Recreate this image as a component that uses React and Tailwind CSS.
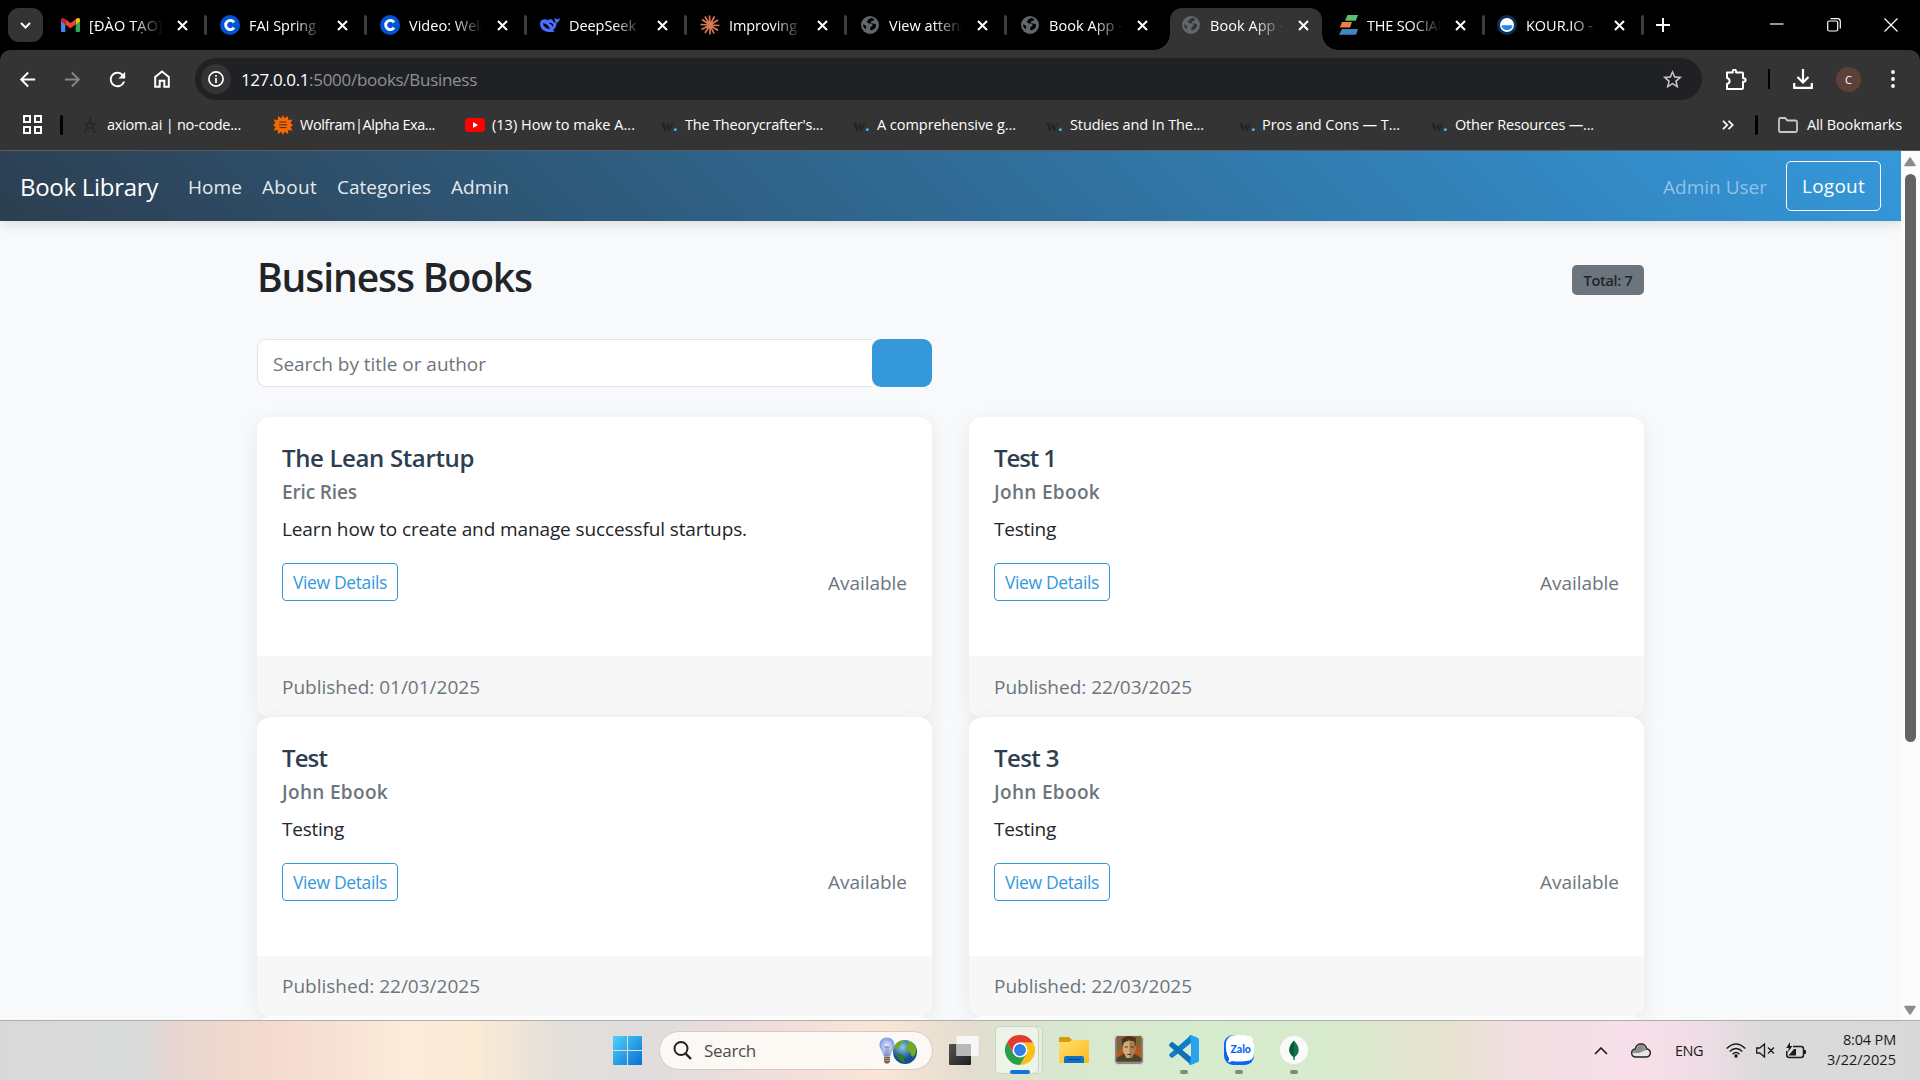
import { useLayoutEffect, useRef, useState } from "react";
import { MdArrowBack, MdArrowForward, MdRefresh, MdStarBorder } from "react-icons/md";

/* Text set to an exact width by spreading the difference over its letters. */
function Fit({ w, children, className = "" }) {
  const ref = useRef(null);
  const [gap, setGap] = useState(0);
  useLayoutEffect(() => {
    const natural = ref.current.getBoundingClientRect().width;
    setGap((w - natural) / children.length);
  }, []);
  return (
    <span ref={ref} className={"inline-block shrink-0 whitespace-pre " + className} style={{ letterSpacing: gap + "px" }}>
      {children}
    </span>
  );
}

const Cross = () => (
  <svg className="size-[11px] shrink-0" viewBox="0 0 11 11">
    <path d="M1 1l9 9M10 1l-9 9" stroke="#fff" strokeWidth="2" />
  </svg>
);

const Gmail = () => (
  <svg className="h-[14px] w-[19px]" viewBox="0 0 19 14">
    <path d="M0 2v11q0 1 1 1h3.3V5.5z" fill="#4285f4" />
    <path d="M19 2v11q0 1-1 1h-3.3V5.5z" fill="#34a853" />
    <path d="M14.7 1.2v5.2L19 3.2V1.8C19 .1 17.2-.4 16 .3z" fill="#fbbc04" />
    <path d="M4.3 6.4V1.2L9.5 5l5.2-3.8v5.2L9.5 10.3z" fill="#ea4335" />
    <path d="M0 1.8v1.4l4.3 3.2V1.2L3 .3C1.8-.4 0 .1 0 1.8z" fill="#c5221f" />
  </svg>
);
const Coursera = () => (
  <svg className="size-5" viewBox="0 0 20 20">
    <circle cx="10" cy="10" r="10" fill="#0056d2" />
    <path d="M14 7.3a4.6 4.6 0 1 0 0 5.4" fill="none" stroke="#fff" strokeWidth="2.9" />
  </svg>
);
const DeepSeek = () => (
  <svg className="h-4 w-5" viewBox="0 0 20 16">
    <path d="M12 2.5c1 2 2 3 3.800 3.300C14.500 4 14.200 2 15 .6c.4 1.200 1.200 1.700 2.200 1.600.8 0 1.700-.6 2.700-1-.1 2.300-1.400 4-3.300 4.500-.1 3.400-1.600 6-3.700 7.500l1.800 1.300c-1.500.8-3.100.7-4.500.4C4.500 15.500 0 12 0 6.800 0 4.200 1.500 2.500 4.500 2.300c1.600 0 2.800.5 4 1.500-.3-1.300.9-2 3.500-1.300z" fill="#4d6bfe" />
    <path d="M3 6.500c3-.2 5.500 1.800 7 5.500-3.700-.2-6.500-2.300-7-5.500z" fill="#000" />
    <path d="M9.500 6.500c1.800-.2 3 .9 3.300 2.600" stroke="#000" strokeWidth="1.200" fill="none" />
  </svg>
);
const Claude = () => (
  <svg className="size-5" viewBox="0 0 20 20">
    <path d="M10 10L9.500.5M10 10l4.500-8.500M10 10l8-5M10 10l9.500.5M10 10l8 5.500M10 10l4 8.500M10 10v9.500M10 10l-5 8M10 10l-8.500 4.500M10 10L.5 9.500M10 10L2 4.500M10 10L5 1.500" stroke="#d97757" strokeWidth="1.700" />
  </svg>
);
const Globe = ({ active }) => (
  <svg className={active ? "size-[18px] text-[#343434]" : "size-[18px] text-black"} viewBox="0 0 18 18">
    <circle cx="9" cy="9" r="9" fill="#62666b" />
    <path d="M10.500 2C8.500 2.500 7 3.400 6.300 5c-.5 1.500.3 2.400 1.700 2.600 1.600.2 3 .1 3.500 1.200.4 1-.5 1.500-1.500 2-.8.5-.5 1.700-1.300 2.700l1.800.8c2.300-.8 4-2.200 4.500-4.300.3-1.400-.5-2-1.800-2.200-1.700-.3-3.400 0-3.500-1.200 0-.9 1-1.200 2-1.500.9-.4 1.300-1.200 1.300-2.300zM2 8.500c1.500.3 3 .8 3.300 2 .2 1-.4 1.600-.8 2.700C3 12 2.100 10.500 2 8.500z" fill="currentColor" />
  </svg>
);
const Stripes = () => (
  <svg className="h-5 w-[19px]" viewBox="0 0 19 20">
    <path d="M8.500 0H19l-2.200 5.700H6z" fill="#5dc06f" />
    <path d="M3 7h10l-2 5.500H.8z" fill="#f08040" />
    <path d="M3 14h16l-2 5.700H0z" fill="#4584c4" />
  </svg>
);
const Kour = () => (
  <svg className="size-5" viewBox="0 0 20 20">
    <circle cx="10" cy="10" r="10" fill="#0b3055" />
    <circle cx="10" cy="10" r="7" fill="#fff" />
    <path d="M4.500 10.300h11a5.500 5 0 0 1-11 0z" fill="#1e88f0" />
  </svg>
);

const tabs = [
  { icon: <Gmail />, t: "[ĐÀO TẠO]", w: 74 },
  { icon: <Coursera />, t: "FAI Spring", w: 67 },
  { icon: <Coursera />, t: "Video: Welc", w: 78 },
  { icon: <DeepSeek />, t: "DeepSeek", w: 67 },
  { icon: <Claude />, t: "Improving", w: 68 },
  { icon: <Globe />, t: "View attend", w: 80 },
  { icon: <Globe />, t: "Book App -", w: 74, last: true },
];

function Tab({ icon, t, w, sep = true, active }) {
  return (
    <div className="flex h-full w-[160px] shrink-0 items-center">
      <div className="flex w-[22px] shrink-0 justify-center">{icon}</div>
      <div className="ml-2 w-[74px] shrink-0 overflow-hidden pt-px text-[14.500px] leading-5 text-white [mask-image:linear-gradient(to_right,black_60%,transparent_100%)]">
        <Fit w={w}>{t}</Fit>
      </div>
      <div className="ml-[9px] flex w-5 shrink-0 justify-center"><Cross /></div>
      {sep && !active && <div className="ml-[12px] h-5 w-[2.500px] rounded bg-[#3c3c3c]" />}
    </div>
  );
}

function TabStrip() {
  return (
    <div className="flex h-[50px] bg-black">
      <div className="mt-2 ml-2 flex h-[34px] w-[35px] shrink-0 items-center justify-center rounded-[11px] bg-[#343434]">
        <svg className="h-[7px] w-[11px]" viewBox="0 0 11 7"><path d="M1 1l4.500 4.500L10 1" fill="none" stroke="#fff" strokeWidth="2" /></svg>
      </div>
      <div className="ml-[16px] flex">
        {tabs.map((x, i) => <Tab key={i} {...x} sep={!x.last} />)}
      </div>
      <div className="-ml-[25px] flex h-full w-[184px] shrink-0 items-end">
        <div className="h-4 w-4 bg-[radial-gradient(circle_at_0_0,transparent_15.500px,#343434_16px)]" />
        <div className="flex h-[42px] w-[152px] items-center overflow-hidden rounded-t-[12px] bg-[#343434] pb-2 pl-[10px]">
          <Tab icon={<Globe active />} t="Book App -" w={74} active />
        </div>
        <div className="h-4 w-4 bg-[radial-gradient(circle_at_100%_0,transparent_15.500px,#343434_16px)]" />
      </div>
      <div className="-ml-px flex shrink-0">
        <div className="flex w-[159px]"><Tab icon={<Stripes />} t="THE SOCIAL" w={78} /></div>
        <div className="flex w-[159px]"><Tab icon={<Kour />} t="KOUR.IO -" w={67} /></div>
      </div>
      <svg className="mt-[18px] ml-px size-[14px] shrink-0" viewBox="0 0 14 14"><path d="M7 0v14M0 7h14" stroke="#fff" strokeWidth="2" /></svg>
      <div className="ml-auto flex items-center gap-[43px] pr-[22px]">
        <svg className="size-[14px]" viewBox="0 0 14 14"><path d="M0 6h13.500" stroke="#fff" strokeWidth="1.200" /></svg>
        <svg className="size-[14px]" viewBox="0 0 14 14"><rect x=".7" y="3" width="10" height="10" rx="1.500" fill="none" stroke="#fff" strokeWidth="1.200" /><path d="M3.500.7h7a2.800 2.800 0 0 1 2.800 2.800v7" fill="none" stroke="#fff" strokeWidth="1.200" /></svg>
        <svg className="size-[14px]" viewBox="0 0 14 14"><path d="M.5.500l13 13M13.500.5l-13 13" stroke="#fff" strokeWidth="1.200" /></svg>
      </div>
    </div>
  );
}

function Toolbar() {
  return (
    <div className="bg-black">
      <div className="flex h-[58px] items-center rounded-t-[10px] bg-[#343434]">
        <MdArrowBack className="ml-[16px] size-[23px] text-white" />
        <MdArrowForward className="ml-[22px] size-[23px] text-[#858585]" />
        <MdRefresh className="ml-[22px] size-[23px] text-white" />
        <svg className="ml-[25px] h-[18px] w-4" viewBox="0 0 16 18"><path d="M1.200 16.800V7L8 1.500 14.800 7v9.800h-4.500v-6H5.700v6z" fill="none" stroke="#fff" strokeWidth="2" /></svg>
        <div className="ml-[25px] flex h-[42px] w-[1507px] items-center rounded-full bg-[#202124]">
          <div className="ml-[6px] flex size-[30px] items-center justify-center rounded-full bg-[#343434]">
            <svg className="size-4" viewBox="0 0 16 16"><circle cx="8" cy="8" r="7.100" fill="none" stroke="#fff" strokeWidth="1.700" /><path d="M8 7v5M8 4v1.700" stroke="#fff" strokeWidth="1.700" /></svg>
          </div>
          <div className="ml-[10px] flex pt-px text-[17px] leading-6">
            <Fit w={68} className="text-white">127.0.0.1</Fit>
            <Fit w={168} className="text-[#8f9194]">:5000/books/Business</Fit>
          </div>
          <MdStarBorder className="mr-[18px] ml-auto size-[23px] text-[#c7c7c7]" />
        </div>
        <svg className="ml-[23px] h-[21px] w-[22px] shrink-0" viewBox="0 0 22 21">
          <path d="M2 3.500h5.700V2.400a1.700 1.700 0 0 1 3.400 0v1.100H17q1 0 1 1v4.800h.9a1.700 1.700 0 0 1 0 3.400H18V19q0 1-1 1H2v-5q2.600-.4 2.600-3T2 9z" fill="none" stroke="#fff" strokeWidth="2" strokeLinejoin="round" />
        </svg>
        <div className="ml-[21px] h-5 w-[2px] bg-black" />
        <svg className="ml-[23px] h-5 w-5" viewBox="0 0 20 20"><path d="M10 0v13M4.500 8l5.500 5.500L15.500 8M1.200 14v4.800h17.600V14" fill="none" stroke="#fff" strokeWidth="2.200" /></svg>
        <div className="ml-[23px] flex size-[25px] items-center justify-center rounded-full bg-[#5d4037] text-[11px] leading-none text-white">C</div>
        <svg className="ml-[30px] h-[18px] w-1" viewBox="0 0 4 18"><g fill="#fff"><circle cx="2" cy="2" r="1.900" /><circle cx="2" cy="9" r="1.900" /><circle cx="2" cy="16" r="1.900" /></g></svg>
      </div>
    </div>
  );
}

const WDot = () => (
  <span className="flex h-4 w-[17px] items-end font-['Liberation_Serif',serif] text-[17px] leading-[14px] font-bold text-[#222]">
    w<span className="text-[#4fc3f7]">.</span>
  </span>
);
const Axiom = () => (
  <svg className="h-[18px] w-3" viewBox="0 0 12 18"><path d="M6 0v4M6 3L1 17M6 3l5 14M2.500 12h7M0 9l4-2M12 9L8 7" stroke="#262626" strokeWidth="1.500" fill="none" /></svg>
);
const Wolfram = () => (
  <svg className="size-5" viewBox="0 0 20 20">
    <path d="M10 0l1.600 3.200L15 1l.3 4 4.200-.6L17.500 8l2.500 2-2.500 2 2 3.600-4.200-.6-.3 4-3.400-2.200L10 20l-1.600-3.200L5 19l-.3-4-4.200.6L2.500 12 0 10l2.500-2-2-3.600 4.200.6L5 1l3.400 2.200z" fill="#f96800" />
    <path d="M6.500 7h7M6 9.800h8M6.500 12.600h7" stroke="#343434" strokeWidth="1" />
  </svg>
);
const YouTube = () => (
  <svg className="h-[14px] w-5" viewBox="0 0 20 14"><rect width="20" height="14" rx="3.500" fill="#f00" /><path d="M8 4v6l5-3z" fill="#fff" /></svg>
);

function Bookmarks() {
  return (
    <div className="flex h-[42px] items-center bg-[#343434] pb-[9px] text-[14.500px] leading-5 text-white">
      <svg className="ml-[23px] size-[19px] shrink-0" viewBox="0 0 19 19"><g fill="none" stroke="#fff" strokeWidth="2"><path d="M1 1h6v6H1zM12 1h6v6h-6zM1 12h6v6H1zM12 12h6v6h-6z" /></g></svg>
      <div className="ml-[18px] h-5 w-[3px] rounded bg-black" />
      <div className="ml-[21px] flex w-[23px] shrink-0"><Axiom /></div>
      <Fit w={134}>axiom.ai | no-code...</Fit>
      <div className="ml-[32px] flex w-[27px] shrink-0"><Wolfram /></div>
      <Fit w={135}>Wolfram|Alpha Exa...</Fit>
      <div className="ml-[30px] flex w-[27px] shrink-0"><YouTube /></div>
      <Fit w={143}>(13) How to make A...</Fit>
      <div className="ml-[26px] flex w-[24px] shrink-0"><WDot /></div>
      <Fit w={138}>The Theorycrafter's...</Fit>
      <div className="ml-[30px] flex w-[24px] shrink-0"><WDot /></div>
      <Fit w={139}>A comprehensive g...</Fit>
      <div className="ml-[30px] flex w-[24px] shrink-0"><WDot /></div>
      <Fit w={134}>Studies and In The...</Fit>
      <div className="ml-[35px] flex w-[23px] shrink-0"><WDot /></div>
      <Fit w={138}>Pros and Cons — T...</Fit>
      <div className="ml-[31px] flex w-[24px] shrink-0"><WDot /></div>
      <Fit w={139}>Other Resources —...</Fit>
      <svg className="ml-[128px] h-[10px] w-3 shrink-0" viewBox="0 0 12 10"><path d="M1 .8L5.200 5 1 9.200M6.500.8L10.700 5 6.500 9.200" fill="none" stroke="#fff" strokeWidth="1.700" /></svg>
      <div className="ml-[21px] h-5 w-[3px] rounded bg-black" />
      <svg className="ml-[20px] h-4 w-5 shrink-0" viewBox="0 0 20 16"><path d="M1 2.500Q1 1 2.500 1H7l2.500 2.500h8Q19 3.500 19 5v8.500q0 1.500-1.500 1.500h-15Q1 15 1 13.500z" fill="none" stroke="#c7c7c7" strokeWidth="1.800" /></svg>
      <Fit w={95} className="ml-[9px]">All Bookmarks</Fit>
    </div>
  );
}

const books = [
  { title: "The Lean Startup", tw: 192, author: "Eric Ries", aw: 75, desc: "Learn how to create and manage successful startups.", dw: 465, date: "01/01/2025" },
  { title: "Test 1", tw: 62, author: "John Ebook", aw: 106, desc: "Testing", dw: 62, date: "22/03/2025" },
  { title: "Test", tw: 45, author: "John Ebook", aw: 106, desc: "Testing", dw: 62, date: "22/03/2025" },
  { title: "Test 3", tw: 65, author: "John Ebook", aw: 106, desc: "Testing", dw: 62, date: "22/03/2025" },
];

function Card({ b }) {
  return (
    <div className="h-[299.500px] rounded-[14px] bg-white shadow-[0_5px_19px_rgba(0,0,0,0.08)]">
      <div className="h-[239px] px-[25px] pt-[26px]">
        <h5 className="text-[24px] leading-[30px] font-semibold text-[#2c3e50]"><Fit w={b.tw}>{b.title}</Fit></h5>
        <h6 className="mt-[7px] h-6 text-[19px] leading-6 font-semibold text-[#6c757d]"><Fit w={b.aw}>{b.author}</Fit></h6>
        <p className="mt-[10px] text-[19px] leading-[30px] text-[#212529]"><Fit w={b.dw}>{b.desc}</Fit></p>
        <div className="mt-[19px] flex h-[38px] items-center justify-between text-[#6c757d]">
          <button className="flex h-[38px] w-[116px] items-center justify-center rounded-[4px] border border-[#3498db] pt-px text-[17.500px] text-[#3498db]"><Fit w={94}>View Details</Fit></button>
          <Fit w={79} className="pt-[2px] text-[19px]">Available</Fit>
        </div>
      </div>
      <div className="flex h-[60.500px] items-center rounded-b-[12px] bg-[#f7f7f7] px-[25px] pt-px text-[19px] text-[#6c757d]">
        <Fit w={198}>{"Published: " + b.date}</Fit>
      </div>
    </div>
  );
}

function Page() {
  return (
    <div className="flex h-[869px] overflow-hidden bg-[#f8f9fb]">
      <div className="w-[1901px]">
        <nav className="flex h-[70px] items-center bg-[linear-gradient(45deg,#2c3e50,#3498db)] pr-5 pl-5 text-[19px] leading-[30px] text-white shadow-[0_3px_12px_rgba(0,0,0,0.12)]">
          <Fit w={138} className="pt-[2px] text-[24px]">Book Library</Fit>
          <div className="ml-[30px] flex gap-5 pt-[2px] text-[#e6e9ec]">
            <Fit w={54}>Home</Fit>
            <Fit w={55}>About</Fit>
            <Fit w={94}>Categories</Fit>
            <Fit w={58}>Admin</Fit>
          </div>
          <Fit w={104} className="ml-auto pt-[2px] text-[#8fc2e9]">Admin User</Fit>
          <button className="ml-[19px] flex h-[50px] w-[95px] items-center justify-center rounded-[5px] border border-white"><Fit w={63}>Logout</Fit></button>
        </nav>
        <main className="mx-auto w-[1387px]">
          <div className="mt-[30px] flex h-12 items-center justify-between">
            <h1 className="pt-[3px] text-[39px] leading-[48px] font-semibold text-[#212529]"><Fit w={275}>Business Books</Fit></h1>
            <span className="mt-[10px] flex h-[30px] w-[72px] items-center justify-center rounded-[5px] bg-[#6c757d] pt-px text-[14.500px] font-semibold text-[#212529]"><Fit w={49}>Total: 7</Fit></span>
          </div>
          <div className="mt-[40px] flex h-12">
            <div className="flex h-12 w-[615px] items-center rounded-l-[9px] border border-r-0 border-[#dee2e6] bg-white pt-[2px] pl-[15px] text-[19px] text-[#6c757d]"><Fit w={213}>Search by title or author</Fit></div>
            <div className="h-12 w-[60px] rounded-[9px] bg-[#3498db]" />
          </div>
          <div className="mt-[30px] grid grid-cols-2 gap-x-[37px]">
            {books.map((b, i) => <Card key={i} b={b} />)}
            <div className="h-[60px] rounded-[14px] bg-white" />
            <div className="h-[60px] rounded-[14px] bg-white" />
          </div>
        </main>
      </div>
      <div className="flex w-[19px] flex-col items-center bg-[#fcfcfc] pt-[6px] pr-px">
        <svg className="h-[10px] w-3" viewBox="0 0 12 10"><path d="M6 1l5 7.500H1z" fill="#8b8b8b" stroke="#8b8b8b" strokeWidth="1.500" strokeLinejoin="round" /></svg>
        <div className="mt-[7px] h-[568px] w-[11px] rounded-full bg-[#636363]" />
        <svg className="mt-[263px] h-[10px] w-3" viewBox="0 0 12 10"><path d="M6 9L1 1.500h10z" fill="#8b8b8b" stroke="#8b8b8b" strokeWidth="1.500" strokeLinejoin="round" /></svg>
      </div>
    </div>
  );
}

const Windows = () => (
  <svg className="size-[29px]" viewBox="0 0 29 29">
    <defs><linearGradient id="win" x1="0" y1="0" x2="1" y2="1"><stop offset="0" stopColor="#4fd3fb" /><stop offset="1" stopColor="#0570cf" /></linearGradient></defs>
    <path d="M1 0h13v14H0V1q0-1 1-1zM15 0h13q1 0 1 1v13H15zM0 15h14v14H1q-1 0-1-1zM15 15h14v13q0 1-1 1H15z" fill="url(#win)" />
  </svg>
);
const BulbGlobe = () => (
  <svg className="h-[27px] w-[38px]" viewBox="0 0 38 27">
    <defs>
      <radialGradient id="bulb"><stop offset="0" stopColor="#eef2ff" /><stop offset="1" stopColor="#809be8" /></radialGradient>
      <radialGradient id="earth" cx=".4" cy=".3"><stop offset="0" stopColor="#8cc8ec" /><stop offset="1" stopColor="#16508f" /></radialGradient>
    </defs>
    <path d="M8 .5c4.500 0 7.500 3.300 7.500 7.500 0 4-3.500 6-4 11h-7C4 14 .5 12 .5 8 .5 3.800 3.500.5 8 .5z" fill="url(#bulb)" />
    <path d="M5 9l2 2 1-2 1 2 2-2M7 11v8M9 11v8" stroke="#7a7f9c" strokeWidth=".9" fill="none" />
    <path d="M5 19.500h6v5L9.500 26.500h-3L5 24.500z" fill="#6e6358" />
    <path d="M5 21.500h6M5 23.500h6" stroke="#b9b0a4" strokeWidth=".7" />
    <circle cx="26" cy="15" r="12" fill="url(#earth)" />
    <path d="M15 10c1.500-3.500 4.500-6 8-6.700l2 1.200-1.500 2-2 .5-.5 2.500-2.500 1.500-1 2.500zM28 3.500c4.500.8 8 4 9.300 8L36.500 17l-2.500 3-2-1.500-.5-3.500-3-.5-2-2.500 1.500-3 2.500-.5-1-2z" fill="#6fae1e" />
    <path d="M17.500 16.500l4.500.5 4 3-1 3 1 2.500c-4-.3-8-4-8.500-9z" fill="#2f7d24" />
  </svg>
);
const TaskView = () => (
  <svg className="size-[30px]" viewBox="0 0 30 30">
    <defs><linearGradient id="tv" x1="0" y1="0" x2="1" y2="1"><stop offset="0" stopColor="#555" /><stop offset="1" stopColor="#1e1e1e" /></linearGradient></defs>
    <rect y="8" width="22" height="21" rx="1" fill="url(#tv)" />
    <rect x="7.500" y="0" width="22" height="20" rx="1" fill="#f7f7f7" />
    <path d="M7.500 8H22v12H7.500z" fill="#b9b9b7" />
  </svg>
);
const Chrome = () => (
  <svg className="size-[30px]" viewBox="0 0 48 48">
    <path d="M24 12h20.800A24 24 0 0 1 24 48l10.400-18z" fill="#fbc116" />
    <path d="M13.600 30L3.200 12A24 24 0 0 0 24 48l10.400-18z" fill="#2b9e49" />
    <path d="M3.200 12A24 24 0 0 1 44.800 12H24L13.600 30z" fill="#e33b2e" />
    <circle cx="24" cy="24" r="12" fill="#fff" />
    <circle cx="24" cy="24" r="9.500" fill="#2f7de9" />
  </svg>
);
const Explorer = () => (
  <svg className="h-[27px] w-[30px]" viewBox="0 0 30 27">
    <defs><linearGradient id="fold" x1="0" y1="0" x2="1" y2="1"><stop offset="0" stopColor="#ffe06e" /><stop offset="1" stopColor="#fbb91b" /></linearGradient></defs>
    <path d="M0 1q0-1 1-1h9l3 3-2 4H0z" fill="#d99b0b" />
    <path d="M0 5h10l3-2h16q1 0 1 1v22H0z" fill="url(#fold)" />
    <path d="M5 26v-5q0-2 2-2h16q2 0 2 2v5z" fill="#0f72c4" />
    <path d="M8.500 22.500h13" stroke="#0a4a86" strokeWidth="1.200" />
  </svg>
);
const Portrait = () => (
  <svg className="size-[30px]" viewBox="0 0 30 30">
    <rect x=".5" y=".5" width="29" height="29" rx="4" fill="#8c8787" stroke="#d9d5d8" />
    <rect x="2.500" y="1" width="25" height="25.500" rx="1.500" fill="#b25a1c" />
    <path d="M3 1.500h7L8 14l-5 4zM20 1.500h7v8l-3 4z" fill="#77683c" />
    <path d="M2.500 26.500V23l7-4h11l7 4v3.500z" fill="#4a4428" />
    <path d="M9 7q6-4.500 12 0l.3 8.500-3.800 7.500h-5L8.700 15.500z" fill="#d0ab7c" />
    <path d="M15.500 6l5.500 1 .3 8.500-3.800 7.500h-2z" fill="#a87c50" />
    <path d="M8.500 12L7.500 4Q14-1.500 22 3L21.500 12 20 6.500l-5-1-5 2z" fill="#4a3520" />
    <path d="M10.500 12h3.300M16.500 12H20M13.300 19.500h3.700" stroke="#48301c" strokeWidth="1.200" />
  </svg>
);
const VSCode = () => (
  <svg className="size-[30px]" viewBox="0 0 30 30">
    <path d="M22 0v8L4 22.500q-1 .7-2 0L.5 21q-.8-1 0-2z" fill="#0f80c8" />
    <path d="M22 30v-8L4 7.500q-1-.7-2 0L.5 9q-.8 1 0 2z" fill="#1170b4" />
    <path d="M.5 11L2 7.500q1-.7 2 0L14 15l-4 4z" fill="#0e72ba" />
    <path d="M22 0l7 3q1 .5 1 1.500v21q0 1-1 1.500l-7 3z" fill="#29a3ee" />
    <path d="M22 0v30q-1 .2-2-1L22 22V8l-2-7q1-1 2-1z" fill="#1d94e0" />
  </svg>
);
const Zalo = () => (
  <div className="relative flex size-[30px] items-center justify-center">
    <svg className="absolute inset-0 size-[30px]" viewBox="0 0 30 30">
      <rect width="30" height="30" rx="9" fill="#0866f5" />
      <path d="M6 1.500Q8 0 12 0h9q9 0 9 9v9q0 8-8 8-9 1-14 0-1.500 1.500-4 1 1.500-2 1-4Q1 17 2 8q.5-4 4-6.500z" fill="#fff" />
    </svg>
    <span className="relative pb-[2px] pl-[3px] font-['Lato',sans-serif] text-[10.500px] leading-none font-black text-[#0866f5]">Zalo</span>
  </div>
);
const Mongo = () => (
  <svg className="size-7" viewBox="0 0 28 28"><circle cx="14" cy="14" r="14" fill="#fafafa" /><path d="M14 4.500c3 3.500 4.800 6 4.700 10-.1 3-2 5-4 6.500V24h-1.400v-3c-2-1.500-3.900-3.500-4-6.500-.1-4 1.700-6.500 4.700-10z" fill="#13724d" /><path d="M14 4.500V21c-2.300-1.500-4.600-3.500-4.700-6.500-.1-4 1.700-6.500 4.700-10z" fill="#0b5a3c" /></svg>
);

function PinnedApp({ children, dot }) {
  return (
    <div className="flex w-[55.200px] shrink-0 flex-col items-center pt-[14px]">
      <div className="flex h-[30px] items-center">{children}</div>
      {dot && <div className="mt-[5px] h-1 w-2 rounded-full bg-[#7d8a78]" />}
    </div>
  );
}

function Taskbar() {
  return (
    <div className="flex h-[60px] border-t border-[#aeaeac] bg-[linear-gradient(to_right,#d9d9d9_0px,#d9dadb_140px,#e7d6d0_175px,#f4dacd_270px,#f7e2d6_340px,#fbebd8_400px,#faead6_480px,#e3dfda_560px,#dfdddd_640px,#f2dedb_790px,#f9e6d6_880px,#e3ddcf_970px,#d8e8d0_1060px,#d7ebcf_1200px,#d8eacd_1340px,#e6e2d0_1440px,#f3dfe4_1530px,#f7dfe9_1640px,#f0dde6_1700px,#dbdadb_1760px,#d9d9d9_1920px)]">
      <div className="mt-[15px] ml-[613px]"><Windows /></div>
      <div className="mt-[10px] ml-[17px] flex h-[39px] w-[274px] items-center rounded-full border border-[#d5cac4] bg-[#fcf8f4]">
        <svg className="ml-[13px] size-[19px]" viewBox="0 0 19 19"><circle cx="8" cy="7.500" r="6.500" fill="none" stroke="#222" strokeWidth="2" /><path d="M12.500 12.500L18 18" stroke="#222" strokeWidth="2.400" /></svg>
        <Fit w={52} className="ml-[12px] text-[17px] leading-6 text-[#4b4b4b]">Search</Fit>
        <div className="mr-[15px] ml-auto"><BulbGlobe /></div>
      </div>
      <div className="mt-[15px] ml-4"><TaskView /></div>
      <div className="mt-[5px] ml-4 flex h-12 w-[48px] rounded-[5px] border border-[#cbd5c6] bg-[#e6eee1]">
        <div className="-mt-px -ml-px flex h-12 w-[44px] shrink-0 flex-col items-center rounded-[5px] border border-[#cbd5c6] bg-[#eef3ea] pt-[8px]">
          <div className="ml-[5px]"><Chrome /></div>
          <div className="mt-[5px] ml-[5px] h-1 w-5 shrink-0 rounded-full bg-[#0a78d4]" />
        </div>
      </div>
      <div className="ml-[3px] flex">
        <PinnedApp><Explorer /></PinnedApp>
        <PinnedApp><Portrait /></PinnedApp>
        <PinnedApp dot><VSCode /></PinnedApp>
        <PinnedApp dot><Zalo /></PinnedApp>
        <PinnedApp dot><Mongo /></PinnedApp>
      </div>
      <div className="ml-auto flex items-center pr-6 text-[#1a1a1a]">
        <svg className="h-2 w-[14px]" viewBox="0 0 14 8"><path d="M1 7l6-6 6 6" fill="none" stroke="#1a1a1a" strokeWidth="1.600" /></svg>
        <svg className="ml-[23px] h-[15px] w-5" viewBox="0 0 20 15"><path d="M5 14q-4.300 0-4.300-4 0-3.500 3.600-4Q5.500 1 10 1t5.700 5q3.600.5 3.600 4t-4 4z" fill="#e6e6e6" stroke="#222" strokeWidth="1.400" /><path d="M1.500 10q0-3 3.500-3.500Q6.500 2 10 2t5 5L8 10z" fill="#8d8d8d" /></svg>
        <Fit w={28} className="ml-[24px] text-[14.500px]">ENG</Fit>
        <svg className="ml-[23px] h-[15px] w-5" viewBox="0 0 20 15"><g fill="none" stroke="#1a1a1a" strokeWidth="1.400"><path d="M.7 5.500Q10-3.500 19.300 5.500M3.700 8.500q6.300-6 12.600 0M6.500 11.200q3.500-3.200 7 0" /></g><circle cx="10" cy="13" r="1.700" fill="#1a1a1a" /></svg>
        <svg className="ml-[10px] h-[15px] w-[19px]" viewBox="0 0 19 15"><path d="M.7 5h3L8.500 1v13L3.700 10h-3zM12 4.500l6 6M18 4.500l-6 6" fill="none" stroke="#1a1a1a" strokeWidth="1.300" /></svg>
        <svg className="ml-[11px] h-[17px] w-5" viewBox="0 0 20 17"><path d="M7 4.500h8q2.500 0 2.500 2.500v6q0 2.500-2.500 2.500H3.200Q.8 15.500.8 13V9" fill="none" stroke="#1a1a1a" strokeWidth="1.500" /><path d="M8 7h2v6.500H2.500zM18 8h1.200q.8 0 .8 1v2q0 1-.8 1H18zM4 0L.3 6H3L1.500 10.500 6.500 4H4z" fill="#1a1a1a" /></svg>
        <div className="ml-[22px] flex w-[68px] flex-col items-end pb-px text-[14.500px] leading-5">
          <Fit w={53}>8:04 PM</Fit>
          <Fit w={69}>3/22/2025</Fit>
        </div>
      </div>
    </div>
  );
}

export default function App() {
  return (
    <div className="flex h-[1080px] w-[1920px] flex-col overflow-hidden bg-black font-['Open_Sans','Noto_Sans',sans-serif]">
      <TabStrip />
      <Toolbar />
      <Bookmarks />
      <div className="h-px bg-[#5c5c5c]" />
      <Page />
      <Taskbar />
    </div>
  );
}
